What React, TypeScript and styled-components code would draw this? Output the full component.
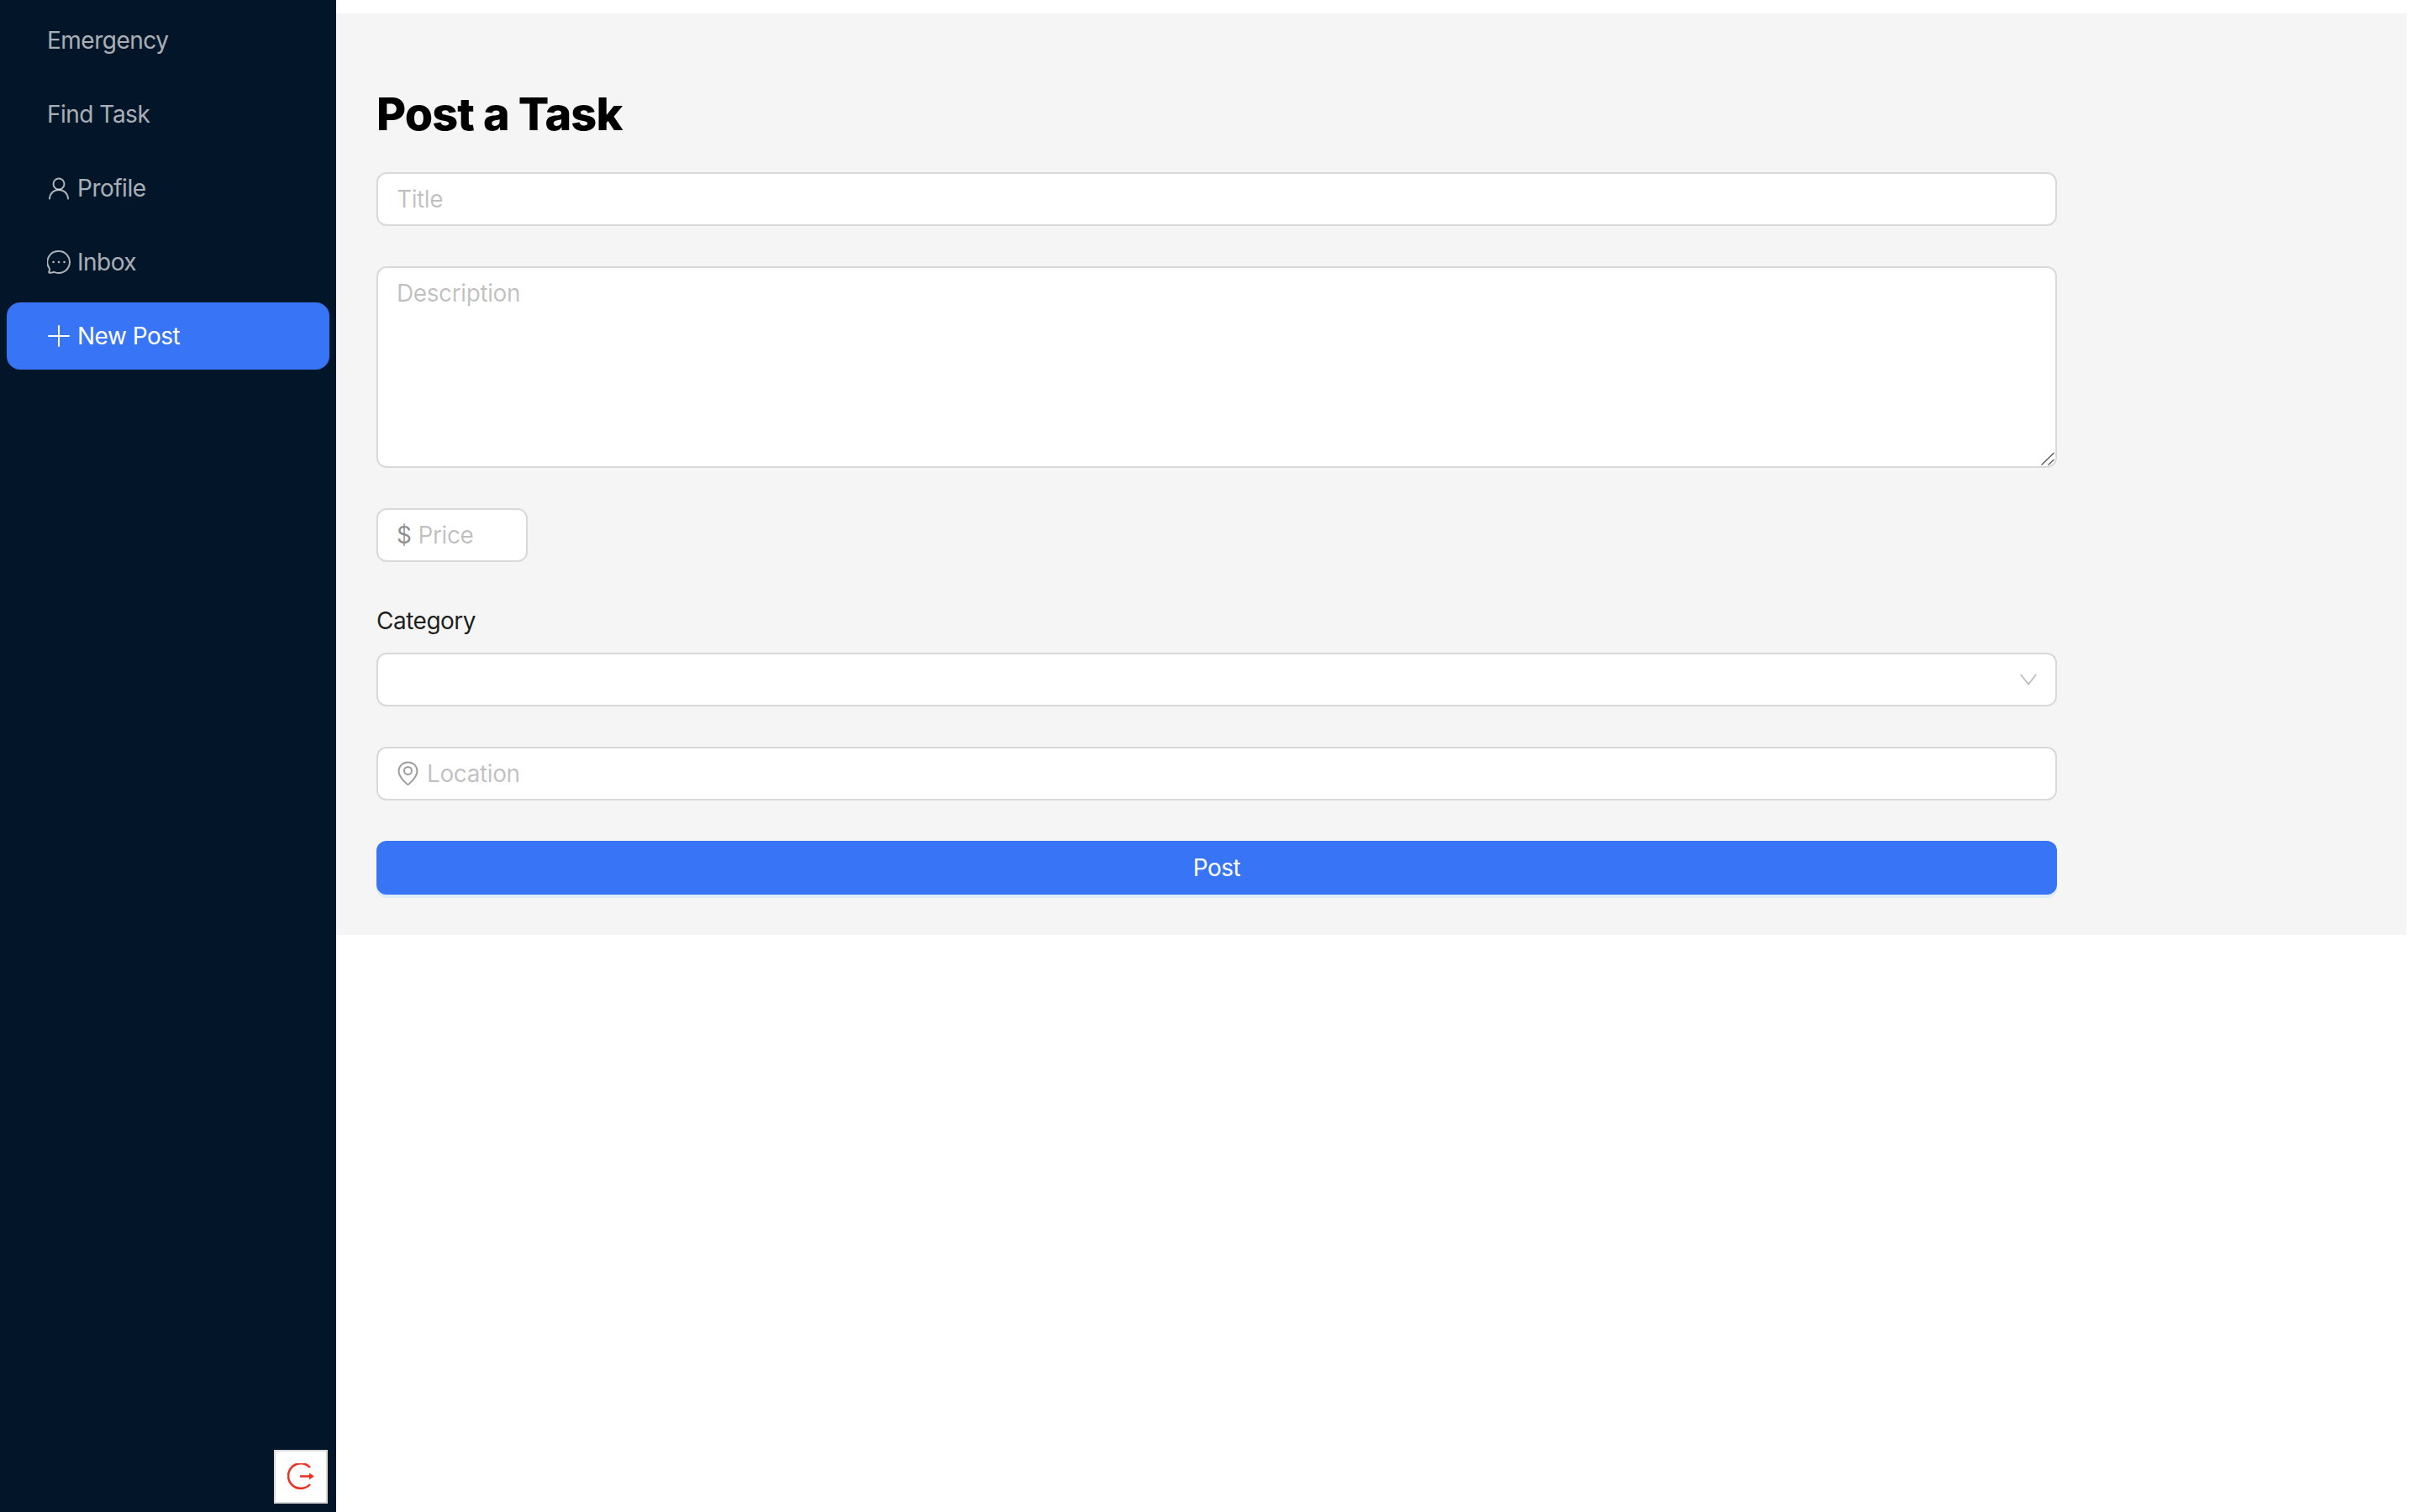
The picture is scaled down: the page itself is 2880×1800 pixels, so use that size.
import React from 'react'
import styled, { createGlobalStyle } from 'styled-components'

const GlobalStyle = createGlobalStyle`
  html, body {
    margin: 0;
    padding: 0;
    background: #ffffff;
  }
  * {
    box-sizing: border-box;
  }
  body {
    font-family: 'Inter', 'Liberation Sans', sans-serif;
    letter-spacing: -0.5px;
  }
`

const Page = styled.div`
  display: flex;
  width: 2880px;
  height: 1800px;
  overflow: hidden;
`
const Sidebar = styled.aside`
  width: 400px;
  flex-shrink: 0;
  display: flex;
  flex-direction: column;
  background: #031629;
`
const NavList = styled.nav`
  display: flex;
  flex-direction: column;
  gap: 8px;
  padding: 8px;
`
const NavItem = styled.div<{ $active?: boolean }>`
  height: 80px;
  display: flex;
  align-items: center;
  gap: 6px;
  padding-left: 48px;
  border-radius: 16px;
  font-size: 28px;
  color: ${(p) => (p.$active ? '#ffffff' : 'rgba(255, 255, 255, 0.67)')};
  background: ${(p) => (p.$active ? '#3875f6' : 'transparent')};
`
const NavIcon = styled.svg`
  width: 30px;
  height: 30px;
  flex-shrink: 0;
  fill: none;
  stroke: currentColor;
  stroke-width: 2;
  stroke-linecap: round;
  stroke-linejoin: round;
`
const LogoutButton = styled.button`
  margin: auto 10px 10px auto;
  width: 64px;
  height: 64px;
  display: flex;
  align-items: center;
  justify-content: center;
  padding: 0;
  background: #ffffff;
  border: 2px solid #d9d9d9;
`
const LogoutIcon = styled.svg`
  width: 32px;
  height: 32px;
  fill: none;
  stroke: #ea3323;
  stroke-width: 2.6;
`
const Main = styled.main`
  flex: 1;
  padding: 16px 16px 0 0;
`
const Panel = styled.section`
  height: 1097px;
  padding: 86px 48px 0;
  background: #f5f5f5;
`
const Heading = styled.h1`
  margin: 0 0 35px;
  font-size: 54px;
  line-height: 68px;
  font-weight: 800;
  letter-spacing: -0.9px;
  color: #000000;
`
const Form = styled.form`
  width: 2000px;
  display: flex;
  flex-direction: column;
`
const Field = styled.div<{ $width?: number }>`
  width: ${(p) => (p.$width ? `${p.$width}px` : '100%')};
  height: 64px;
  margin-bottom: 48px;
  padding: 0 22px;
  display: flex;
  align-items: center;
  gap: 8px;
  background: #ffffff;
  border: 2px solid #d9d9d9;
  border-radius: 12px;
`
const Input = styled.input`
  flex: 1;
  min-width: 0;
  height: 100%;
  padding: 0;
  border: 0;
  outline: 0;
  background: transparent;
  font-family: inherit;
  font-size: 28px;
  letter-spacing: -0.4px;
  color: #000000;
  &::placeholder {
    color: rgba(0, 0, 0, 0.25);
    opacity: 1;
  }
`
const TextAreaWrap = styled.div`
  position: relative;
  height: 240px;
  margin-bottom: 48px;
`
const TextArea = styled.textarea`
  display: block;
  width: 100%;
  height: 100%;
  padding: 8px 22px;
  background: #ffffff;
  border: 2px solid #d9d9d9;
  border-radius: 12px;
  outline: 0;
  resize: none;
  font-family: inherit;
  font-size: 28px;
  line-height: 44px;
  letter-spacing: -0.4px;
  &::placeholder {
    color: rgba(0, 0, 0, 0.25);
    opacity: 1;
  }
`
const ResizeGrip = styled.svg`
  position: absolute;
  right: 3px;
  bottom: 3px;
  width: 16px;
  height: 16px;
  fill: none;
  stroke: #555555;
  stroke-width: 1.3;
  pointer-events: none;
`
const Prefix = styled.span`
  font-size: 28px;
  color: rgba(0, 0, 0, 0.45);
`
const Label = styled.label`
  height: 44px;
  margin-bottom: 16px;
  font-size: 28px;
  line-height: 44px;
  color: rgba(0, 0, 0, 0.88);
`
const SelectBox = styled(Field)`
  justify-content: flex-end;
`
const Chevron = styled.svg`
  width: 20px;
  height: 14px;
  fill: none;
  stroke: rgba(0, 0, 0, 0.25);
  stroke-width: 2;
`
const PinIcon = styled.svg`
  width: 28px;
  height: 30px;
  flex-shrink: 0;
  fill: none;
  stroke: rgba(0, 0, 0, 0.38);
  stroke-width: 2;
`
const SubmitButton = styled.button`
  width: 100%;
  height: 64px;
  border: 0;
  border-radius: 12px;
  background: #3875f6;
  box-shadow: 0 4px 0 rgba(5, 145, 255, 0.1);
  font-family: inherit;
  font-size: 28px;
  letter-spacing: inherit;
  color: #ffffff;
`

const App = () => (
  <Page>
    <GlobalStyle />
    <Sidebar>
      <NavList>
        <NavItem>Emergency</NavItem>
        <NavItem>Find Task</NavItem>
        <NavItem>
          <NavIcon viewBox="0 0 30 30">
            <circle cx="14" cy="10" r="6.5" />
            <path d="M3 27.500C3.500 21 8 17 14 17s10.500 4 11 10.500" />
          </NavIcon>
          Profile
        </NavItem>
        <NavItem>
          <NavIcon viewBox="0 0 30 30">
            <path d="M14 2a13 13 0 1 1-5.500 24.800c-1.500.6-3.500 1-5.500.9-.7 0-1-.6-.7-1.200.6-1 .9-2.500.5-4A13 13 0 0 1 14 2z" />
            <path d="M7.500 15h.1M14 15h.1M20.500 15h.1" strokeWidth="2.600" />
          </NavIcon>
          Inbox
        </NavItem>
        <NavItem $active>
          <NavIcon viewBox="0 0 30 30">
            <path d="M14 3v24M2 15h24" />
          </NavIcon>
          New Post
        </NavItem>
      </NavList>
      <LogoutButton aria-label="Log out">
        <LogoutIcon viewBox="0 0 32 32">
          <path d="M27 5A14.900 14.900 0 1 0 27 25" />
          <path d="M15 15.500h12" />
          <path d="M26 11.500l6 4-6 4z" fill="#ea3323" stroke="none" />
        </LogoutIcon>
      </LogoutButton>
    </Sidebar>
    <Main>
      <Panel>
        <Heading>Post a Task</Heading>
        <Form>
          <Field>
            <Input placeholder="Title" />
          </Field>
          <TextAreaWrap>
            <TextArea placeholder="Description" />
            <ResizeGrip viewBox="0 0 16 16">
              <path d="M.5 15.500L15.500 1M8.500 15.500L15.500 9" />
            </ResizeGrip>
          </TextAreaWrap>
          <Field $width={180}>
            <Prefix>$</Prefix>
            <Input placeholder="Price" />
          </Field>
          <Label>Category</Label>
          <SelectBox>
            <Chevron viewBox="0 0 20 14">
              <path d="M.8 1L10 12.500 19.200 1" />
            </Chevron>
          </SelectBox>
          <Field>
            <PinIcon viewBox="0 0 28 30">
              <path d="M13.500 1.500c6.500 0 11 4.800 11 10.500 0 5.500-5 11-10 15.500-.6.500-1.400.500-2 0-5-4.500-10-10-10-15.500 0-5.700 4.500-10.500 11-10.500z" />
              <circle cx="13.500" cy="11.500" r="4.500" />
            </PinIcon>
            <Input placeholder="Location" />
          </Field>
          <SubmitButton type="button">Post</SubmitButton>
        </Form>
      </Panel>
    </Main>
  </Page>
)

export default App
